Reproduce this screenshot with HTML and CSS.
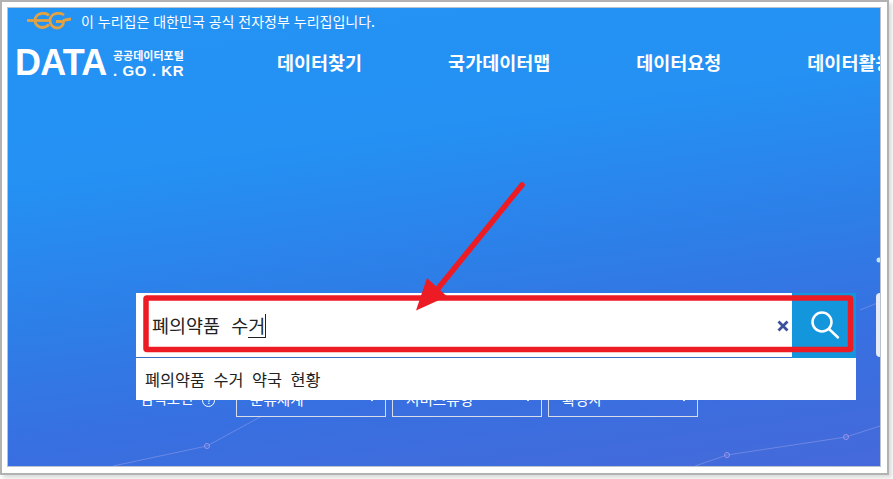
FILE: index.html
```html
<!DOCTYPE html>
<html lang="ko">
<head>
    <meta charset="UTF-8">
    <title>공공데이터포털</title>
    <link rel="stylesheet" href="styles.css">
</head>
<body>
<div class="frame">
    <div class="shot">
        <svg class="netLines" viewBox="0 0 872 458">
            <polyline points="105,458 199,438 254,408"/>
            <polyline points="687,458 719,447 838,429 872,418"/>
            <polyline points="852,302 872,294"/>
            <circle cx="199" cy="438" r="2.5"/>
            <circle cx="719" cy="447" r="2.5"/>
            <circle cx="838" cy="429" r="2.5"/>
            <circle class="netDot" cx="871" cy="252" r="2.5"/>
        </svg>

        <div class="govBar">
            <svg class="govLogo" viewBox="0 0 44 18">
                <path d="M0 8.500H24"/>
                <path d="M22 3.500C20 1.500 17 1 14.500 1.500C10.500 2 8 5 8 8.500C8 12 11 15.500 15 15.500C18 15.500 20 14.500 22 12.500"/>
                <path d="M37 3C35 1.500 32 1 29.500 1.500C25.500 2 23 5 23 8.500C23 12.500 26 16 30 16C34 16 36.500 13 36.500 9.500L29 9.500"/>
                <path d="M36 8.500L44 7"/>
            </svg>
            <span>이 누리집은 대한민국 공식 전자정부 누리집입니다.</span>
        </div>

        <div class="header">
            <div class="logo">
                <div class="logoBig">DATA</div>
                <div class="logoSide">
                    <div class="logoKo">공공데이터포털</div>
                    <div class="logoEn">. GO . KR</div>
                </div>
            </div>
            <div class="nav">
                <div class="navItem">데이터찾기</div>
                <div class="navItem">국가데이터맵</div>
                <div class="navItem">데이터요청</div>
                <div class="navItem">데이터활용</div>
            </div>
        </div>

        <div class="hero">
            <div class="searchBox">
                <div class="searchInput">
                    <div class="searchText">폐의약품 수<span class="composing">거</span></div>
                    <svg class="clearIcon" viewBox="0 0 12 12">
                        <path d="M1.500 1.500L10.500 10.500M10.500 1.500L1.500 10.500"/>
                    </svg>
                </div>
                <div class="searchBtn">
                    <svg class="searchIcon" viewBox="0 0 30 30">
                        <circle cx="12" cy="12" r="9.500"/>
                        <path d="M19 19L28 27.500"/>
                    </svg>
                </div>
                <div class="suggest">폐의약품 수거 약국 현황</div>
            </div>

            <div class="filters">
                <div class="filterLabel">검색조건<span class="helpIcon">?</span></div>
                <div class="filterBox">분류체계<span class="caret"></span></div>
                <div class="filterBox">서비스유형<span class="caret"></span></div>
                <div class="filterBox">확장자<span class="caret"></span></div>
            </div>
        </div>

        <div class="sideTab"></div>
    </div>

    <!-- red annotation drawn over the screenshot -->
    <svg class="marks" viewBox="0 0 893 479">
        <rect x="146" y="298" width="704.500" height="51.500" rx="1"/>
        <path class="arrowLine" d="M522 185L436 291"/>
        <polygon points="416,310.500 427,278 447,296.500"/>
    </svg>
</div>
</body>
</html>
```

FILE: styles.css
```css
html, body {
    margin: 0;
    padding: 0;
}
body {
    width: 893px;
    height: 479px;
    overflow: hidden;
    background: #fff;
    font-family: "Noto Sans CJK KR", "Noto Sans", sans-serif;
}
.frame {
    position: relative;
    box-sizing: border-box;
    width: 889px;
    height: 475px;
    padding: 5px 6px 6px 5px;
    background: #fff;
    border: 2px solid #b2b2b2;
    box-shadow: 3px 3px 4px #d9dddc;
}
.shot {
    position: relative;
    width: 872px;
    height: 458px;
    overflow: hidden;
    border: 1px solid #b9c3cf;
    color: #fff;
    background: linear-gradient(172deg, #2393f4 0%, #2491f3 30%, #2d7fe8 55%, #3770e1 75%, #4569da 100%);
}
.netLines {
    position: absolute;
    top: 0;
    left: 0;
    width: 872px;
    height: 458px;
}
.netLines polyline {
    fill: none;
    stroke: #7f93e6;
    stroke-width: 1;
    opacity: 0.7;
}
.netLines circle {
    fill: none;
    stroke: #a094ea;
    stroke-width: 1;
}
.netLines .netDot {
    fill: #bfe6f2;
    stroke: none;
}

.govBar {
    position: relative;
    display: flex;
    align-items: center;
    height: 26px;
    padding-left: 19px;
    font-size: 14px;
}
.govLogo {
    width: 44px;
    height: 18px;
    margin-right: 10px;
}
.govLogo path {
    fill: none;
    stroke: #e3a242;
    stroke-width: 2.800;
}

.header {
    position: relative;
    display: flex;
    align-items: center;
    height: 58px;
}
.logo {
    display: flex;
    flex: none;
    align-items: center;
    width: 269px;
    padding-left: 7px;
    box-sizing: border-box;
}
.logoBig {
    width: 98px;
    font-family: "Liberation Sans", sans-serif;
    font-size: 36px;
    font-weight: bold;
    letter-spacing: -0.800px;
}
.logoKo {
    font-size: 11px;
    line-height: 12px;
    font-weight: bold;
    margin-top: 1px;
}
.logoEn {
    margin-top: 1px;
    font-family: "Liberation Sans", sans-serif;
    font-size: 15px;
    line-height: 17px;
    font-weight: bold;
    letter-spacing: 0.600px;
    white-space: nowrap;
}
.nav {
    display: flex;
    flex: none;
    gap: 86px;
    white-space: nowrap;
}
.navItem {
    font-size: 18.500px;
    line-height: 24px;
    font-weight: bold;
    margin-top: -2px;
}

.hero {
    position: relative;
    padding: 201px 0 0 128px;
}
.searchBox {
    position: relative;
    display: flex;
    width: 720px;
    height: 65px;
}
.searchInput {
    flex: 1;
    display: flex;
    align-items: center;
    justify-content: space-between;
    box-sizing: border-box;
    padding: 0 3px 0 16px;
    background: #fff;
    border-bottom: 1px solid #3a6bc8;
    color: #222;
}
.searchText {
    font-size: 18.500px;
    word-spacing: 6px;
    line-height: 24px;
    margin-top: 1px;
}
.composing {
    display: inline-block;
    border-bottom: 1px solid #222;
    border-right: 1px solid #222;
    line-height: 23px;
}
.clearIcon {
    width: 12px;
    height: 12px;
    margin-top: 2px;
}
.clearIcon path {
    fill: none;
    stroke: #3b4f9d;
    stroke-width: 2.800;
}
.searchBtn {
    display: flex;
    align-items: center;
    justify-content: center;
    width: 64px;
    background: #1496dc;
}
.searchIcon {
    width: 30px;
    height: 30px;
    margin: 0 0 1px 1px;
}
.searchIcon circle, .searchIcon path {
    fill: none;
    stroke: #fff;
    stroke-width: 2.500;
    stroke-linecap: round;
}
.suggest {
    position: absolute;
    top: 65px;
    left: 0;
    width: 711px;
    height: 42px;
    padding-left: 9px;
    background: #fff;
    color: #222;
    font-size: 16.300px;
    line-height: 42px;
    word-spacing: 4px;
    z-index: 2;
}

.filters {
    display: flex;
    gap: 6px;
    margin-top: 22px;
}
.filterLabel {
    width: 94px;
    padding-left: 4px;
    box-sizing: border-box;
    font-size: 14.500px;
    line-height: 36px;
    white-space: nowrap;
}
.helpIcon {
    display: inline-block;
    width: 11px;
    height: 11px;
    margin-left: 9px;
    border: 1px solid #fff;
    border-radius: 50%;
    font-size: 9px;
    line-height: 11px;
    text-align: center;
}
.filterBox {
    position: relative;
    box-sizing: border-box;
    width: 150px;
    height: 37px;
    padding-left: 13px;
    border: 1px solid #d8dce8;
    font-size: 14.600px;
    line-height: 35px;
}
.caret {
    position: absolute;
    top: 13px;
    right: 10px;
    width: 5px;
    height: 5px;
    border-right: 1px solid #fff;
    border-bottom: 1px solid #fff;
    transform: rotate(45deg);
}

.sideTab {
    position: absolute;
    top: 285px;
    right: 0;
    width: 4px;
    height: 64px;
    background: #e6ecf8;
    border-radius: 4px 0 0 4px;
}

.marks {
    position: absolute;
    top: -2px;
    left: -2px;
    width: 893px;
    height: 479px;
}
.marks rect {
    fill: none;
    stroke: #ed1c24;
    stroke-width: 5.500;
}
.marks polygon {
    fill: #ed1c24;
}
.marks .arrowLine {
    fill: none;
    stroke: #ed1c24;
    stroke-width: 5.500;
    stroke-linecap: round;
}
```
